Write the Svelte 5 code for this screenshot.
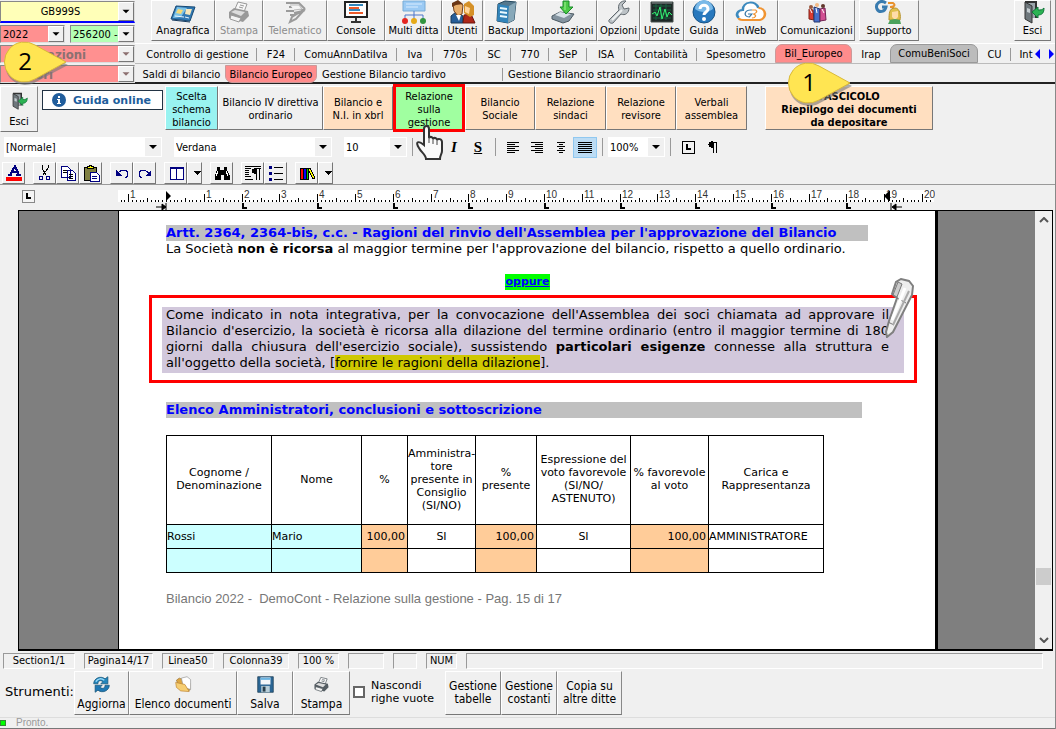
<script lang="ts">
    type Tool = { id: string; label: string; width: number; disabled?: boolean; gap?: number };
    type Tab = { label: string; width: number; tone?: string; sep?: boolean };

    const tools: Tool[] = [
        { id: 'card', label: 'Anagrafica', width: 64 },
        { id: 'printer', label: 'Stampa', width: 48, disabled: true },
        { id: 'send', label: 'Telematico', width: 64, disabled: true },
        { id: 'console', label: 'Console', width: 58 },
        { id: 'multi', label: 'Multi ditta', width: 57 },
        { id: 'users', label: 'Utenti', width: 41 },
        { id: 'server', label: 'Backup', width: 44, gap: 1 },
        { id: 'import', label: 'Importazioni', width: 69 },
        { id: 'wrench', label: 'Opzioni', width: 43 },
        { id: 'update', label: 'Update', width: 44 },
        { id: 'help', label: 'Guida', width: 40 },
        { id: 'cloud', label: 'inWeb', width: 54 },
        { id: 'people', label: 'Comunicazioni', width: 77 },
        { id: 'support', label: 'Supporto', width: 60, gap: 4 }
    ];

    const mainTabs: Tab[] = [
        { label: 'Controllo di gestione', width: 119, sep: true },
        { label: 'F24', width: 38, sep: true },
        { label: 'ComuAnnDatiIva', width: 102, sep: true },
        { label: 'Iva', width: 36, sep: true },
        { label: '770s', width: 44, sep: true },
        { label: 'SC', width: 34, sep: true },
        { label: '770', width: 38, sep: true },
        { label: 'SeP', width: 38, sep: true },
        { label: 'ISA', width: 38, sep: true },
        { label: 'Contabilità', width: 72, sep: true },
        { label: 'Spesometro', width: 78 },
        { label: 'Bil_Europeo', width: 77, tone: 'pink' },
        { label: 'Irap', width: 38 },
        { label: 'ComuBeniSoci', width: 88, tone: 'gray' },
        { label: 'CU', width: 33, sep: true },
        { label: 'Int', width: 30 }
    ];

    const subTabs: Tab[] = [
        { label: 'Saldi di bilancio', width: 87 },
        { label: 'Bilancio Europeo', width: 92, tone: 'pink', sep: true },
        { label: 'Gestione Bilancio tardivo', width: 186, sep: true },
        { label: 'Gestione Bilancio straordinario', width: 160 }
    ];

    const steps = [
        { lines: ['Scelta', 'schema', 'bilancio'], width: 53, tone: 'cyan' },
        { lines: ['Bilancio IV direttiva', 'ordinario'], width: 105, tone: 'plain' },
        { lines: ['Bilancio e', 'N.I. in xbrl'], width: 70, tone: 'peach' },
        { lines: ['Relazione', 'sulla', 'gestione'], width: 72, tone: 'current' },
        { lines: ['Bilancio', 'Sociale'], width: 70, tone: 'peach' },
        { lines: ['Relazione', 'sindaci'], width: 71, tone: 'peach' },
        { lines: ['Relazione', 'revisore'], width: 70, tone: 'peach' },
        { lines: ['Verbali', 'assemblea'], width: 71, tone: 'peach' }
    ];

    const editGroups = [
        ['color'],
        ['cut', 'copy', 'paste'],
        ['undo', 'redo'],
        ['table', 'drop'],
        ['find'],
        ['para', 'list'],
        ['books', 'drop']
    ];

    const names: Record<string, string> = {
        color: 'Colore testo', cut: 'Taglia', copy: 'Copia', paste: 'Incolla', undo: 'Annulla', redo: 'Ripeti',
        table: 'Tabella', drop: 'Altro', find: 'Trova', para: 'Paragrafo', list: 'Elenco', books: 'Libreria'
    };

    const status = [
        { text: 'Section1/1', width: 72 },
        { text: 'Pagina14/17', width: 69 },
        { text: 'Linea50', width: 52 },
        { text: 'Colonna39', width: 66 },
        { text: '100 %', width: 41 },
        { text: '', width: 36 },
        { text: '', width: 24 },
        { text: 'NUM', width: 31 }
    ];

    const footerTools: Tool[] = [
        { id: 'refresh', label: 'Aggiorna', width: 55 },
        { id: 'folder', label: 'Elenco documenti', width: 108 },
        { id: 'floppy', label: 'Salva', width: 56 },
        { id: 'printer', label: 'Stampa', width: 57 }
    ];

    const columns = [105, 90, 46, 68, 61, 94, 78, 115];
    const headers = [
        ['Cognome /', 'Denominazione'],
        ['Nome'],
        ['%'],
        ['Amministra-', 'tore', 'presente in', 'Consiglio', '(SI/NO)'],
        ['%', 'presente'],
        ['Espressione del', 'voto favorevole', '(SI/NO/', 'ASTENUTO)'],
        ['% favorevole', 'al voto'],
        ['Carica e', 'Rappresentanza']
    ];
    const kinds = ['name', 'name', 'pct', 'mid', 'pct', 'mid', 'pct', 'text'];
    const rows = [
        ['Rossi', 'Mario', '100,00', 'SI', '100,00', 'SI', '100,00', 'AMMINISTRATORE'],
        ['', '', '', '', '', '', '', '']
    ];

    const origin = 48;
    const cm = 37.8;
    const ticks = Array.from({ length: 215 }, (_, i) => i - 12);
    const marks = Array.from({ length: 22 }, (_, i) => i - 1).filter((n) => n !== 0);
    const stops = [2, 4, 6, 8, 10, 12, 14, 16, 18];

    let activeTab = $state('Bil_Europeo');
    let hideEmpty = $state(false);
</script>

{#snippet arrow()}
    <svg class="arrow" viewBox="0 0 16 16" aria-hidden="true"><path d="M4 6h8L8 10z" fill="currentColor" /></svg>
{/snippet}

{#snippet printer(color: string)}
    <path d="M8 9l3-7 9 2-3 8z" fill="#f8f8f8" stroke={color} />
    <path d="M2 12l5-4 14 3 1 5-6 6L2 18z" fill={color} />
    <path d="M4 12l4-2 10 2-4 4z" fill="#ddd" />
    <path d="M4 15l10 3-2 4-9-3z" fill="#f4f4f4" stroke={color} />
    <path d="M13 5l4 1M12 7l4 1" stroke={color} />
{/snippet}

{#snippet door()}
    <path d="M4 1h12v17H4z" fill="#333" />
    <path d="M6 3h8v15H6z" fill="#9aa4aa" />
    <path d="M4 2l7 4v17l-7-4z" fill="#6e777c" stroke="#333" />
    <path d="M6 8l3 1v4l-3-1z" fill="#c4ccd0" />
    <path d="M11 12l6-5v3c3 0 4 0 6-2 0 5-2 7-6 7v3z" fill="#2cb353" stroke="#11763a" />
{/snippet}

{#snippet icon(id: string)}
    <svg class="icon" viewBox="0 0 24 24" fill="none" aria-hidden="true">
        {#if id === 'card'}
            <path d="M5 6l19 1-5 14-19-2z" fill="#3179b3" stroke="#174a75" />
            <path d="M6 7l10 1-6 9-8 1z" fill="#7cc3e8" />
            <path d="M7 9l5 1-2 4-5-1z" fill="#f4da78" />
            <path d="M15 9h6l-2 6-5-1z" fill="#f6e7bc" />
            <path d="M4 16l9 1M14 17l4 1" stroke="#e8f6ff" />
            <path d="M1 20l18 2" stroke="#173b5f" />
        {:else if id === 'printer-off'}
            {@render printer('#999')}
        {:else if id === 'printer'}
            {@render printer('#555d63')}
        {:else if id === 'send'}
            <path d="M3 3h13l6 6M6 7h10l4 4-9 2M3 11h8M7 15h5M22 9l-9 10-6 3 2-5z" stroke="#9b9b9b" stroke-width="2" />
            <path d="M7 5h9l3 4-8 1" fill="#f5f5f5" stroke="#bbb" />
        {:else if id === 'console'}
            <path d="M1 2h22v15H1z" fill="#fff" stroke="#222" stroke-width="2" />
            <path d="M5 5h14M5 10h11" stroke="#3287bd" stroke-width="2" />
            <path d="M5 8h10M5 13h14" stroke="#ed5b2b" stroke-width="2" />
            <path d="M12 18v4M7 22h10" stroke="#333" stroke-width="2" />
        {:else if id === 'multi'}
            <path d="M1 1h22v10H1z" fill="#9bcaf4" stroke="#79abd5" />
            <path d="M4 4h16M4 7h12" stroke="#d9ecff" />
            <path d="M12 11v8M3 19v-4h18v4" stroke="#4c76cb" />
            <circle cx="3" cy="21" r="3" fill="#e52620" /><circle cx="12" cy="21" r="3" fill="#e6aa17" /><circle cx="21" cy="21" r="3" fill="#31953e" />
        {:else if id === 'users'}
            <path d="M0 23v-7l5-4 7 4v7z" fill="#275e98" stroke="#193755" />
            <path d="M12 23l1-8 7-1 4 9z" fill="#ad2719" stroke="#6a160e" />
            <path d="M2 4l6-2 4 3-1 9-4 2-4-5z" fill="#e8ad69" stroke="#71401d" />
            <path d="M1 7V3l6-3 5 4-7 1z" fill="#6b3615" />
            <path d="M13 4l5-3 5 5v9l-4 2-6-4z" fill="#d59128" />
            <path d="M14 6l5 2-1 6-4-2z" fill="#ffd49b" />
            <path d="M5 15l3 6 2-6" fill="#fff" />
        {:else if id === 'server'}
            <path d="M4 4l7-3 11 1-2 18-6 3-11-2z" fill="#55788d" stroke="#23475d" />
            <path d="M4 4l11 2-1 17-11-2z" fill="#3284ba" />
            <path d="M15 6l7-4-2 18-6 3z" fill="#87a8b9" />
            <path d="M6 8l7 1M6 12l7 1M6 16l7 1" stroke="#e9f9ff" stroke-width="2" />
        {:else if id === 'import'}
            <path d="M1 16l8-4 14 2-5 7-6 2L1 19z" fill="#8494a0" stroke="#4b5962" />
            <path d="M4 15l5-3 11 2-7 4z" fill="#d7e1e8" />
            <path d="M12 1h6v6h4l-7 7-6-7h3z" fill="#4bc947" stroke="#188a28" />
            <path d="M14 2v8" stroke="#a2f393" />
        {:else if id === 'wrench'}
            <path d="M2 20L12 10c-2-5 2-10 7-9l-4 4 2 4 5-1c0 5-4 8-8 6L6 23c-2 1-5-1-4-3z" fill="#bcc2c6" stroke="#626a6f" />
            <path d="M5 20L15 10" stroke="#eef1f2" stroke-width="2" />
        {:else if id === 'update'}
            <path d="M1 2h22v20H1z" fill="#1e2827" stroke="#46504f" />
            <path d="M3 6h18M3 10h18M3 14h18M3 18h18M6 4v16M11 4v16M16 4v16" stroke="#176341" />
            <path d="M2 14l3-2 2 4 3-9 2 12 3-10 2 8 2-5 3 3" stroke="#33f472" />
            <path d="M2 3h20" stroke="#8b9695" />
        {:else if id === 'help'}
            <circle cx="12" cy="12" r="11" fill="#2878bd" stroke="#175386" />
            <path d="M3 9a9 9 0 0 1 18 0c-5 4-13 4-18 0" fill="#79b9e8" />
            <path d="M8 9c0-5 8-5 8 0 0 3-4 3-4 6" stroke="#fff" stroke-width="3" />
            <circle cx="12" cy="19" r="2" fill="#fff" />
        {:else if id === 'cloud'}
            <g transform="translate(-4 0) scale(1.3 1)">
                <path d="M3 18c-3-3-1-8 3-8C6 1 16 0 18 8" fill="#fff" stroke="#3d8abe" stroke-width="2" />
                <path d="M18 8c6 0 7 10 1 12H6c-2 0-3-1-3-2" fill="#fff" stroke="#f09432" stroke-width="2" />
                <path d="M13 10c-6-1-7 7-2 7l2-3h-3" stroke="#3777a5" />
                <path d="M13 10h3c2 2-1 4-2 4 3 1 2 4-1 4" stroke="#f09432" />
            </g>
        {:else if id === 'people'}
            <path d="M4 9l4 1 1 10-5-1z" fill="#dd3a30" stroke="#802218" /><path d="M9 7l6 2v13H9z" fill="#466fca" stroke="#25376e" /><path d="M15 9l5-1 1 12-6 1z" fill="#d14f92" stroke="#712353" />
            <path d="M5 9l2 4M11 8l1 5M17 9l2 4" stroke="#fff" />
            <circle cx="6" cy="7" r="2" fill="#9a583d" /><circle cx="12" cy="5" r="2" fill="#f4b984" /><circle cx="18" cy="6" r="2" fill="#60372b" />
        {:else if id === 'support'}
            <g transform="translate(-1 0)">
                <path d="M10 3C4-1-1 4 1 9c2 4 8 3 9-2H6" stroke="#397baf" stroke-width="3" />
                <path d="M12 3h5c4 3-1 4-3 4 5 0 4 4 1 5" stroke="#e8912c" stroke-width="2" />
                <path d="M13 20c0-6 0-12 6-12 5 0 6 8 5 12z" fill="#dfbf4c" stroke="#b7932e" />
                <path d="M16 12l6-1v6l-3 3-3-3z" fill="#ffdca8" />
                <path d="M12 24l2-4 5-1 5 1 1 4z" fill="#4ba15b" />
            </g>
        {:else if id === 'exit'}
            {@render door()}
        {:else if id === 'refresh'}
            <path d="M1 11C1 3 11-1 17 4l4-3v10H11l3-3c-4-3-7-1-7 3z" fill="#2386bd" stroke="#155274" />
            <path d="M23 13c0 8-10 12-16 7l-4 3V13h10l-3 3c4 3 7 1 7-3z" fill="#1f78b4" stroke="#155274" />
            <path d="M4 8c3-5 8-5 12-2" stroke="#9cddfa" stroke-width="2" />
        {:else if id === 'folder'}
            <path d="M2 6l4-3 5 2 10 5v10H8z" fill="#dca642" stroke="#9b702c" />
            <path d="M9 3l8-2 5 4v14l-10-3z" fill="#fff" stroke="#999" />
            <path d="M1 9l13 3 6 10-12-1-6-5z" fill="#f6ce72" stroke="#bf8734" />
        {:else if id === 'floppy'}
            <path d="M1 1h22v22H1z" fill="#2b6695" stroke="#17394f" />
            <path d="M5 2h14v10H5z" fill="#f4f7fa" /><path d="M5 4h14" stroke="#6bb3e1" stroke-width="3" />
            <path d="M6 14h12v9H6z" fill="#b8ced9" /><path d="M8 15h4v7H8z" fill="#283e4b" />
        {/if}
    </svg>
{/snippet}

{#snippet glyph(id: string)}
    <svg class="glyph" viewBox="0 0 18 18" fill="none" aria-hidden="true">
        {#if id === 'color'}
            <path d="M3 11h4M11 11h5M5 11L10 2l4 9M7 8h5" stroke="#000080" stroke-width="2" /><path d="M1 13h16v4H1z" fill="#f00" />
        {:else if id === 'cut'}
            <path d="M6 1v3l4 7M12 1v3L7 11" stroke="#000" /><circle cx="5" cy="14" r="2" stroke="#000080" /><circle cx="12" cy="14" r="2" stroke="#000080" />
        {:else if id === 'copy'}
            <path d="M2 2h6l3 3v8H2zM8 6h5l3 3v7H8z" fill="#fff" stroke="#000080" /><path d="M4 6h4M4 8h4M10 10h4M10 12h4M10 14h4" stroke="#000" />
        {:else if id === 'paste'}
            <path d="M2 3h12v13H2z" fill="#808040" stroke="#000" /><path d="M5 4h6V2H9V1H7v1H5z" fill="#ff0" stroke="#000" /><path d="M8 8h6l3 3v6H8z" fill="#fff" stroke="#000080" /><path d="M10 12h5M10 14h5" stroke="#000080" />
        {:else if id === 'undo'}
            <path d="M5 10c2-5 10-5 10 0 0 2-1 3-3 4" stroke="#000080" /><path d="M3 6v6h6z" fill="#000080" />
        {:else if id === 'redo'}
            <path d="M13 10C11 5 3 5 3 10c0 2 1 3 3 4" stroke="#000080" /><path d="M15 6v6H9z" fill="#000080" />
        {:else if id === 'table'}
            <path d="M3 3h13v12H3z" fill="#fff" stroke="#000080" /><path d="M3 4h13" stroke="#000080" stroke-width="2" /><path d="M9 3v12" stroke="#000080" />
        {:else if id === 'drop'}
            <path d="M5 7h8l-4 4z" fill="#000" />
        {:else if id === 'find'}
            <path d="M4 3h3v3h4V3h3v3l3 6v4h-6v-5H8v5H2v-4l2-6z" fill="#000" /><path d="M5 7l-2 5M13 7l2 5" stroke="#fff" />
        {:else if id === 'para'}
            <path d="M1 2h16M1 4h6M1 6h4M1 8h4M1 10h4M1 12h6M1 15h8" stroke="#000" /><path d="M11 4h6M12 4v12M15 4v12" stroke="#000" /><path d="M12 4c-6 0-6 6 0 6z" fill="#000" />
        {:else if id === 'list'}
            <path d="M2 2h3v3H2zM2 8h3v3H2zM2 14h3v3H2z" fill="#000080" /><path d="M7 3h9M7 9h9M7 15h9" stroke="#000" />
        {:else if id === 'books'}
            <path d="M2 4h3v11H2z" fill="#f00" stroke="#000" /><path d="M5 4h3v11H5z" fill="#00f" stroke="#000" /><path d="M8 4h2v11H8z" fill="#0c0" stroke="#000" /><path d="M10 5l2-1 5 10-2 1z" fill="#ff0" stroke="#000" />
        {/if}
    </svg>
{/snippet}

{#snippet tab(t: Tab)}
    <button
        class="tab {t.tone ?? ''}"
        class:sep={t.sep}
        role="tab"
        aria-selected={t.label === activeTab}
        style:width="{t.width}px"
        onclick={() => (activeTab = t.label)}>{t.label}</button>
{/snippet}

{#snippet tool(t: Tool)}
    <button class="tool" disabled={t.disabled} style:width="{t.width}px" style:margin-left="{t.gap ?? 0}px">
        {@render icon(t.disabled && t.id === 'printer' ? 'printer-off' : t.id)}
        <span>{t.label}</span>
    </button>
{/snippet}

{#snippet pick(name: string, value: string, kind: string, off = false)}
    <span class="pick {kind}">
        <select aria-label={name} disabled={off}><option>{value}</option></select>
        {@render arrow()}
    </span>
{/snippet}

{#snippet callout(n: string)}
    <svg viewBox="0 0 66 46" aria-hidden="true">
        <path d="M64 23L30 41A20 20 0 1 1 30 5z" fill="#777" opacity=".6" transform="translate(1 2)" />
        <path d="M63 22L32 39A20 20 0 1 1 32 5z" fill="#ffe552" stroke="#d9b93a" />
        <text x="22" y="30">{n}</text>
    </svg>
{/snippet}

<div class="app">
    <header>
        <div class="filters">
            {@render pick('Ditta', 'GB999S', 'yellow')}
            <div class="pair">
                {@render pick('Anno', '2022', 'pink')}
                {@render pick('Codice', '256200 -', 'green')}
            </div>
            {@render pick('Operazioni', 'Operazioni', 'pink off', true)}
            {@render pick('Valori', 'Valori', 'pink off', true)}
            <div class="callout two">{@render callout('2')}</div>
        </div>
        <div class="head-main">
            <nav class="tools" aria-label="Strumenti principali">
                {#each tools as t}
                    {@render tool(t)}
                {/each}
                <span class="fill"></span>
                {@render tool({ id: 'exit', label: 'Esci', width: 37 })}
            </nav>
            <div class="tabs" role="tablist" aria-label="Moduli">
                {#each mainTabs as t}
                    {@render tab(t)}
                {/each}
                <svg class="scroller" viewBox="0 0 20 10" aria-hidden="true"><path d="M5 0v10L0 5zM14 0v10l5-5z" fill="#00f" /></svg>
            </div>
            <div class="tabs sub" role="tablist" aria-label="Bilancio">
                {#each subTabs as t}
                    {@render tab(t)}
                {/each}
            </div>
        </div>
    </header>

    <div class="steps">
        <button class="tool leave">
            {@render icon('exit')}
            <span>Esci</span>
        </button>
        <a class="guide" href="#guida">
            <svg viewBox="0 0 14 14" aria-hidden="true"><circle cx="7" cy="7" r="7" fill="#205d9c" /><path d="M6 6h2v4h1v1H5v-1h1V7H5V6zM6 3h2v2H6z" fill="#fff" /></svg>
            Guida online
        </a>
        {#each steps as s}
            <button class="step {s.tone}" style:width="{s.width}px">
                {#each s.lines as line}<span>{line}</span>{/each}
                {#if s.tone === 'current'}
                    <svg class="hand" viewBox="0 0 28 36" aria-hidden="true">
                        <path d="M8 20V4c0-4 5-4 5 0v9c1-2 4-1 4 1 1-2 4-1 4 1 1-2 5-1 5 2v9c0 3-2 4-2 8H10c0-4-5-7-7-11-4-6-1-8 5-3z" fill="#fafafa" stroke="#333" stroke-width="2" />
                        <path d="M13 12v6M17 14v5M21 15v5" stroke="#444" />
                    </svg>
                {/if}
            </button>
        {/each}
        <button class="step peach bundle">
            <span>FASCICOLO</span><span>Riepilogo dei documenti</span><span>da depositare</span>
        </button>
        <div class="callout one">{@render callout('1')}</div>
    </div>

    <div class="editbar">
        <div class="format">
            {@render pick('Stile', '[Normale]', 'white wide')}
            {@render pick('Carattere', 'Verdana', 'white wide')}
            {@render pick('Dimensione', '10', 'white size')}
            <span class="rule"></span>
            <button class="flat bold">G</button>
            <button class="flat italic">I</button>
            <button class="flat under">S</button>
            <span class="rule"></span>
            <button class="flat" aria-label="Allinea a sinistra"><svg viewBox="0 0 14 12"><path d="M1 1h12M1 3h8M1 5h12M1 7h8M1 9h12M1 11h8" stroke="#000" /></svg></button>
            <button class="flat" aria-label="Allinea a destra"><svg viewBox="0 0 14 12"><path d="M1 1h12M5 3h8M1 5h12M5 7h8M1 9h12M5 11h8" stroke="#000" /></svg></button>
            <button class="flat" aria-label="Centra"><svg viewBox="0 0 14 12"><path d="M3 1h8M5 3h4M3 5h8M5 7h4M3 9h8M5 11h4" stroke="#000" /></svg></button>
            <button class="flat on" aria-label="Giustifica"><svg viewBox="0 0 14 12"><path d="M0 1h14M0 3h14M0 5h14M0 7h14M0 9h14M0 11h14" stroke="#000" /></svg></button>
            <span class="rule"></span>
            {@render pick('Zoom', '100%', 'white zoom')}
            <span class="rule"></span>
            <button class="flat" aria-label="Tabulazione"><svg class="tabstop" viewBox="0 0 14 14"><path d="M1 1h12v12H1z" fill="none" stroke="#000" /><path d="M5 4h2v4h3v2H5z" /></svg></button>
            <button class="flat" aria-label="Segni di paragrafo"><svg viewBox="0 0 14 12"><path d="M7 1h5M8 1v11M11 1v11" stroke="#000" /><path d="M8 0C2 0 2 7 8 7z" /></svg></button>
        </div>
        <div class="edit">
            {#each editGroups as group}
                <div class="group">
                    {#each group as id}
                        <button class="tile" class:narrow={id === 'drop'} aria-label={names[id]}>{@render glyph(id)}</button>
                    {/each}
                </div>
            {/each}
        </div>
    </div>

    <div class="ruler">
        <svg class="corner" viewBox="0 0 14 14" aria-hidden="true"><path d="M1 1h12v12H1z" fill="#f4f4f4" stroke="#888" /><path d="M5 4h2v4h3v2H5z" /></svg>
        <svg class="scale" viewBox="0 0 817 22" aria-hidden="true">
            <path d="M0 1h816v12H0z" fill="#fff" />
            {#each ticks as i}
                <path d="M{Math.round(origin + (i * cm) / 10)} {i % 10 === 0 ? 5 : i % 5 === 0 ? 9 : 11}h1V13h-1z" />
            {/each}
            {#each marks as n}
                <text x={Math.round(origin + n * cm) + 2} y="9">{Math.abs(n)}</text>
            {/each}
            {#each stops as n}
                <path d="M{Math.round(origin + n * cm)} 14h2v4h3v2h-5z" />
            {/each}
            <path d="M48 2l5 5-5 5zM772 2v10h-1l-5-5 5-5z" />
            <path d="M38 18h8M44 15l4 3-4 3zM48 14v7M776 18h8M778 15l-4 3 4 3zM773 14v7" stroke="#000" />
        </svg>
    </div>

    <main>
        <div class="desk">
            <article>
                <h2 class="first">Artt. 2364, 2364-bis, c.c. - Ragioni del rinvio dell'Assemblea per l'approvazione del Bilancio</h2>
                <p>La Società <b>non è ricorsa</b> al maggior termine per l'approvazione del bilancio, rispetto a quello ordinario.</p>
                <div class="or"><mark>oppure</mark></div>
                <section class="frame">
                    <p>
                        <span>Come indicato in nota integrativa, per la convocazione dell'Assemblea dei soci chiamata ad approvare il</span>
                        <span>Bilancio d'esercizio, la società è ricorsa alla dilazione del termine ordinario (entro il maggior termine di 180</span>
                        <span>giorni dalla chiusura dell'esercizio sociale), sussistendo <b>particolari esigenze</b> connesse alla struttura e</span>
                        <span class="last">all'oggetto della società, [<mark>fornire le ragioni della dilazione</mark>].</span>
                    </p>
                    <svg class="pen" viewBox="0 0 30 60" aria-hidden="true">
                        <path d="M7 16l4-12 5-3 8 2 4 5-1 9L8 54l-6 5-1-5 3-11 8-23z" fill="#eee" stroke="#808080" stroke-width="2" />
                        <path d="M8 17l5-13 4 2-5 13zM12 20l9 5M3 44l6 3" fill="#ccc" stroke="#777" />
                        <path d="M20 10L7 42" stroke="#fff" stroke-width="3" /><path d="M24 13L8 47" stroke="#aaa" stroke-width="2" />
                    </svg>
                </section>
                <h2>Elenco Amministratori, conclusioni e sottoscrizione</h2>
                <table>
                    <colgroup>
                        {#each columns as w}<col style:width="{w}px" />{/each}
                    </colgroup>
                    <thead>
                        <tr>
                            {#each headers as lines}
                                <th>{#each lines as line}<span>{line}</span>{/each}</th>
                            {/each}
                        </tr>
                    </thead>
                    <tbody>
                        {#each rows as row}
                            <tr>
                                {#each row as cell, i}<td class={kinds[i]}>{cell}</td>{/each}
                            </tr>
                        {/each}
                    </tbody>
                </table>
                <footer>Bilancio 2022 -&nbsp; DemoCont - Relazione sulla gestione - Pag. 15 di 17</footer>
            </article>
        </div>
        <div class="scrollbar" aria-hidden="true">
            <svg viewBox="0 0 10 6"><path d="M1 5l4-4 4 4" /></svg>
            <span class="thumb"></span>
            <svg viewBox="0 0 10 6"><path d="M1 1l4 4 4-4" /></svg>
        </div>
    </main>

    <div class="status">
        {#each status as s}<span style:width="{s.width}px">{s.text}</span>{/each}
        <span class="fill"></span>
    </div>

    <div class="bottom">
        <span class="title">Strumenti:</span>
        <div class="tools">
            {#each footerTools as t}
                {@render tool(t)}
            {/each}
        </div>
        <label class="hide"><input type="checkbox" bind:checked={hideEmpty} /><span>Nascondi<br />righe vuote</span></label>
        <div class="tools">
            <button class="tool words">Gestione<br />tabelle</button>
            <button class="tool words">Gestione<br />costanti</button>
            <button class="tool words large">Copia su<br />altre ditte</button>
        </div>
    </div>
    <div class="ready"><i></i>Pronto.</div>
</div>

<style>
:global(body) {
    margin: 0;
    background: #f0f0f0;
}

.app {
    display: flex;
    flex-direction: column;
    box-sizing: border-box;
    min-height: 100vh;
    overflow: hidden;
    border-right: 1px solid #888;
    background: #f0f0f0;
    color: #000;
    font-family: "DejaVu Sans Condensed", "DejaVu Sans", sans-serif;
    font-size: 11px;
    line-height: 13px;
}

.app * {
    box-sizing: border-box;
}

button,
select {
    font: inherit;
    color: inherit;
    margin: 0;
    padding: 0;
    border: 0;
    border-radius: 0;
    background: none;
    white-space: nowrap;
}

svg {
    display: block;
    flex: none;
}

.fill {
    flex: 1;
}

header {
    display: flex;
    height: 84px;
    border-bottom: 2px solid #222;
}

.filters {
    position: relative;
    display: flex;
    flex-direction: column;
    gap: 2px;
    width: 135px;
    padding-top: 1px;
    flex: none;
}

.pair {
    display: flex;
    gap: 5px;
}

.pick {
    display: grid;
    flex: 1;
    height: 18px;
    border: 1px solid #999;
    border-color: #888 #ddd #ddd #888;
}

.pick select {
    grid-area: 1 / 1;
    width: 100%;
    height: 100%;
    padding: 0 16px 0 2px;
    appearance: none;
    opacity: 1;
}

.pick .arrow {
    grid-area: 1 / 1;
    justify-self: end;
    width: 16px;
    height: 100%;
    background: #f0f0f0;
    border: 1px solid #bbb;
    border-color: #fff #777 #777 #fff;
    pointer-events: none;
}

.pick.yellow {
    flex: none;
    height: 22px;
    background: #ffffb8;
    border-bottom: 2px solid #00f;
}

.yellow select {
    text-align: center;
}

.green {
    background: #b4ffb4;
}

.pick.pink {
    background: #ff9090;
}

.pick.off {
    flex: none;
    color: #8c7070;
    font-weight: bold;
    font-size: 13px;
}

.pick.off select {
    padding-left: 14px;
}

.callout {
    position: absolute;
    width: 66px;
    pointer-events: none;
}

.callout text {
    font-family: "Open Sans", sans-serif;
    font-size: 24px;
    text-anchor: middle;
}

.two {
    left: 3px;
    top: 40px;
}

.head-main {
    flex: 1;
    min-width: 0;
}

.tools {
    display: flex;
    height: 40px;
}

.head-main .tools {
    padding: 0 4px 0 16px;
    height: 43px;
}

.tool {
    display: flex;
    flex-direction: column;
    align-items: center;
    justify-content: flex-end;
    flex: none;
    height: 41px;
    padding-bottom: 3px;
    border: 1px solid #777;
    border-color: #fff #888 #777 #fff;
}

.tool:disabled {
    color: #8c8c8c;
}

.icon {
    width: 24px;
    height: 24px;
    overflow: visible;
}

.tabs {
    display: flex;
    align-items: flex-end;
    height: 21px;
    padding-left: 3px;
    border-bottom: 1px solid #bbb;
    border-top: 1px solid #fff;
}

.tabs.sub {
    height: 19px;
    border: 0;
}

.tab {
    flex: none;
    height: 17px;
}

.tab.sep {
    background: linear-gradient(#999, #999) right / 1px 13px no-repeat;
}

.tab.pink,
.tab.gray {
    height: 19px;
    border-radius: 7px 7px 0 0;
    background: #ff8c8c;
    border: 1px solid #c99;
}

.tabs.sub .pink {
    height: 18px;
    border-radius: 0 0 7px 7px;
}

.tab.gray {
    background: #bcbcbc;
    border-color: #999;
}

.tabs.sub .tab:nth-child(n + 3) {
    padding-left: 5px;
    text-align: left;
}

.scroller {
    align-self: center;
    width: 20px;
    height: 10px;
    margin-left: -6px;
}

.steps {
    position: relative;
    display: flex;
    align-items: flex-start;
    height: 48px;
    padding-top: 2px;
}

.leave {
    width: 38px;
    height: 46px;
}

.leave .icon {
    width: 18px;
    height: 18px;
    margin-bottom: 5px;
}

.guide {
    display: flex;
    align-items: center;
    gap: 7px;
    width: 121px;
    height: 20px;
    margin: 4px 2px 0 4px;
    padding-left: 9px;
    border: 1px solid #234;
    background: #fff;
    color: #205d9c;
    font-family: "DejaVu Sans", sans-serif;
    font-weight: bold;
    text-decoration: none;
    white-space: nowrap;
}

.guide svg {
    width: 14px;
    height: 14px;
}

.step {
    position: relative;
    display: flex;
    flex-direction: column;
    align-items: center;
    justify-content: center;
    flex: none;
    height: 44px;
    padding-top: 2px;
    border: 1px solid #777;
    border-color: #fff #777 #777 #fff;
}

.cyan {
    background: #99f3f1;
}

.peach {
    background: #ffdfc0;
}

.step.current {
    height: 48px;
    margin-top: -2px;
    background: #a0ffa0;
    border: 3px solid #f00;
}

.bundle {
    width: 168px;
    margin-left: 18px;
    font-weight: bold;
}

.hand {
    position: absolute;
    left: 20px;
    top: 38px;
    width: 28px;
    height: 36px;
    z-index: 2;
}

.one {
    left: 787px;
    top: -23px;
}

.editbar {
    border-bottom: 1px solid #999;
}

.format {
    display: flex;
    align-items: center;
    height: 30px;
    padding-left: 4px;
}

.pick.white {
    flex: none;
    height: 20px;
    background: #fff;
    border: 0;
}

.pick.white .arrow {
    width: 18px;
    border: 1px solid #fff;
}

.pick.wide {
    width: 158px;
    margin-right: 12px;
}

.pick.size {
    width: 63px;
}

.pick.zoom {
    width: 57px;
}

.rule {
    width: 1px;
    height: 18px;
    margin: 0 5px;
    background: #999;
}

.flat {
    display: grid;
    place-items: center;
    width: 24px;
    height: 21px;
    font: bold 15px "Liberation Serif", serif;
}

.flat svg {
    width: 14px;
    height: 12px;
    shape-rendering: crispEdges;
}

.flat .tabstop {
    height: 14px;
}

.italic {
    font-style: italic;
}

.under {
    text-decoration: underline;
}

.flat.on {
    background: #bcdcf4;
    border: 1px solid #90c8f0;
}

.edit {
    display: flex;
    gap: 8px;
    height: 22px;
    padding-left: 2px;
}

.group {
    display: flex;
}

.tile {
    display: grid;
    place-items: center;
    width: 23px;
    height: 22px;
    border: 1px solid #777;
    border-color: #fff #777 #777 #fff;
}

.tile.narrow {
    width: 15px;
}

.glyph {
    width: 18px;
    height: 18px;
    shape-rendering: crispEdges;
}

.ruler {
    display: flex;
    height: 25px;
    padding: 4px 0 0 21px;
}

.corner {
    width: 14px;
    height: 14px;
    margin-right: 83px;
    shape-rendering: crispEdges;
}

.scale {
    width: 817px;
    height: 22px;
}

.scale text {
    font: 10px "Liberation Sans", sans-serif;
    fill: #333;
}

main {
    display: flex;
    flex: 1;
    margin: 0 2px 0 18px;
    border: 1px solid #000;
    border-bottom-width: 2px;
}

.desk {
    flex: 1;
    padding-left: 99px;
    background: #7f7f7f;
}

article {
    width: 820px;
    height: 100%;
    padding: 14px 0 0 47px;
    border-left: 1px solid #000;
    border-right: 3px solid #000;
    background: #fff;
    font-family: "DejaVu Sans", sans-serif;
    font-size: 13px;
    line-height: 16px;
}

article h2 {
    width: 696px;
    margin: 19px 0 17px;
    background: #c0c0c0;
    color: #00f;
    font-size: 13px;
    line-height: 16px;
    white-space: nowrap;
}

article h2.first {
    width: 702px;
    margin: 0;
}

article p {
    margin: 0;
    white-space: nowrap;
}

.or {
    width: 723px;
    margin: 17px 0 5px;
    text-align: center;
    font-size: 11px;
    font-weight: bold;
}

.or mark {
    display: inline-block;
    background: #0f0;
    color: #00f;
    text-decoration: underline;
}

.frame {
    position: relative;
    width: 768px;
    margin-left: -17px;
    padding: 9px 10px 7px;
    border: 3px solid #f00;
}

.frame p {
    padding: 0 15px 2px 4px;
    background: #d2c8dc;
}

.frame p span {
    display: block;
    text-align-last: justify;
}

.frame p .last {
    text-align-last: left;
}

.frame mark {
    background: #cfc800;
    color: #000;
}

.pen {
    position: absolute;
    right: -1px;
    top: -20px;
    width: 30px;
    height: 60px;
}

table {
    width: 658px;
    table-layout: fixed;
    border-collapse: collapse;
    font-size: 11px;
    line-height: 13px;
}

th,
td {
    padding: 0;
    border: 1px solid #000;
    font-weight: normal;
    white-space: nowrap;
}

th {
    height: 89px;
    padding-bottom: 2px;
}

th span {
    display: block;
}

td {
    height: 24px;
}

.name {
    background: #cff;
}

.pct {
    padding-right: 2px;
    background: #fc9;
    text-align: right;
}

.mid {
    text-align: center;
}

footer {
    margin-top: 18px;
    color: #777;
    font-family: "Liberation Sans", sans-serif;
    font-size: 13px;
}

.scrollbar {
    display: flex;
    flex-direction: column;
    align-items: center;
    justify-content: space-between;
    width: 17px;
    padding: 6px 0;
}

.scrollbar svg {
    width: 10px;
    height: 6px;
    fill: none;
    stroke: #555;
    stroke-width: 2px;
}

.thumb {
    width: 15px;
    height: 17px;
    margin: auto 0 52px;
    background: #ccc;
}

.status {
    display: flex;
    gap: 9px;
    height: 20px;
    padding: 2px 12px 2px 3px;
}

.status span {
    border: 1px solid #999;
    border-color: #999 #fff #fff #999;
    text-align: center;
    white-space: nowrap;
}

.bottom {
    display: flex;
    align-items: flex-start;
    height: 46px;
}

.bottom .title {
    width: 74px;
    padding: 14px 0 0 5px;
    font-family: "DejaVu Sans", sans-serif;
    font-size: 13px;
}

.bottom .tool {
    height: 44px;
    font-size: 12px;
}

.bottom .icon {
    width: 17px;
    height: 17px;
    margin-bottom: 5px;
}

.hide {
    display: flex;
    align-items: center;
    gap: 6px;
    width: 95px;
    height: 41px;
    padding-left: 3px;
    font-family: "DejaVu Sans", sans-serif;
}

.hide input {
    width: 12px;
    height: 12px;
    flex: none;
    margin: 0;
    appearance: none;
    border: 2px solid #666;
    background: #fff;
}

.hide span {
    white-space: nowrap;
}

.bottom .words {
    display: block;
    width: 56px;
    padding: 0;
}

.bottom .large {
    width: 65px;
}

.ready {
    display: flex;
    align-items: center;
    gap: 10px;
    height: 12px;
    border-top: 1px solid #ddd;
    border-bottom: 1px solid #777;
    color: #999;
    font-family: "Liberation Sans", sans-serif;
    font-size: 10px;
    line-height: 10px;
}

.ready i {
    width: 6px;
    height: 6px;
    background: #0f0;
    border: 1px solid #383;
}
</style>
